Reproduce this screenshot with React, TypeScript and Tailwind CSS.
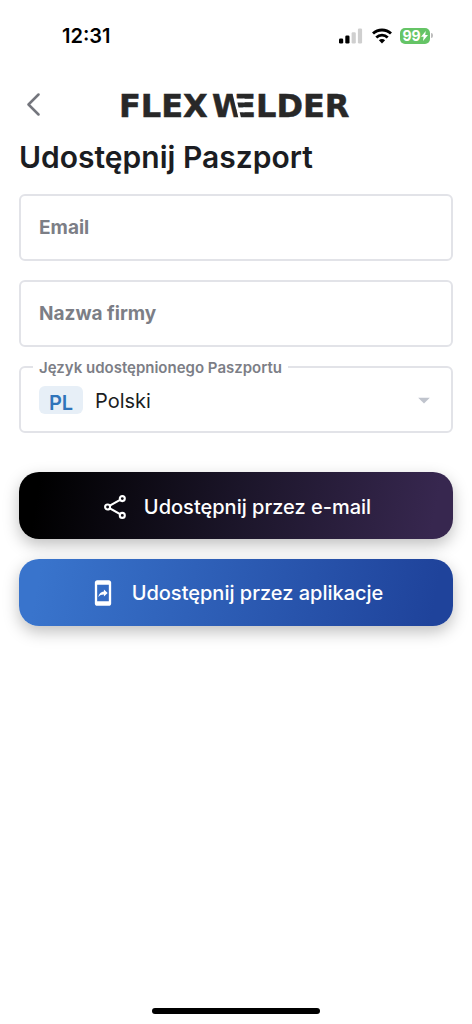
import { useState } from 'react';
import { MdArrowDropDown, MdMobileScreenShare } from 'react-icons/md';

const languages = [
  { code: 'PL', name: 'Polski' },
  { code: 'EN', name: 'English' },
  { code: 'DE', name: 'Deutsch' },
];

const StatusBar = () => (
  <div className="flex items-center justify-between pt-6 pl-[62px] pr-[39px] h-[47px]">
    <span className="text-[20px] leading-6 font-semibold text-black">12:31</span>
    <div className="flex items-center gap-2">
      <svg width="25" height="16" viewBox="0 0 25 16" aria-hidden="true">
        <rect x="0" y="10.5" width="4.2" height="5" rx="1.3" fill="#000" />
        <rect x="6.3" y="7.5" width="4.2" height="8" rx="1.3" fill="#000" />
        <rect x="12.6" y="4.2" width="4.2" height="11.3" rx="1.3" fill="#cfcfcf" />
        <rect x="18.9" y="0.5" width="4.2" height="15" rx="1.3" fill="#cfcfcf" />
      </svg>
      <svg width="20" height="16" viewBox="0 0 20 16" aria-hidden="true">
        <g fill="none" stroke="#000" strokeWidth="2.8">
          <path d="M1 5.6a13 13 0 0 1 18 0" />
          <path d="M4.3 9.4a8.2 8.2 0 0 1 11.4 0" />
        </g>
        <path d="M10 15.4 6.9 12.3a4.4 4.4 0 0 1 6.2 0z" fill="#000" />
      </svg>
      <div className="flex items-center gap-px">
        <div className="flex items-center justify-center w-[30px] h-4 rounded-[5px] bg-[#65c466] text-white">
          <span className="text-[14px] leading-4 font-bold">99</span>
          <svg width="7" height="10" viewBox="0 0 7 10" aria-hidden="true">
            <path d="M4.8 0 0 5.8h2.6L2 10l5-6H4.2z" fill="#fff" />
          </svg>
        </div>
        <div className="w-[2px] h-[5px] rounded-r-full bg-[#bdbdbd]" />
      </div>
    </div>
  </div>
);

// The W runs into a striped E, split by a diagonal gap
const Logo = () => (
  <svg width="232" height="40" viewBox="0 0 232 40" role="img" aria-label="Flexwelder">
    <defs>
      <clipPath id="w-cut">
        <path d="M88 0h22.6l9.5 40H88z" />
      </clipPath>
    </defs>
    <g fill="#282828" stroke="#282828" strokeWidth="0.5" fontFamily="'DejaVu Sans', sans-serif" fontSize="32" fontWeight="700">
      <text x="114" y="32">E</text>
      <path d="M110 13.5h14.6v4H110zM110 22.4h14.6v4.8H110zM110 0h3.2l9.5 40H110z" fill="#fff" stroke="none" />
      <text x="-1" y="32">FLEX</text>
      <text x="92" y="32" clipPath="url(#w-cut)">W</text>
      <text x="136" y="32">LDER</text>
    </g>
  </svg>
);

const ShareIcon = () => (
  <svg width="22" height="24" viewBox="0 0 22 24" fill="none" stroke="#fff" strokeWidth="2.1" aria-hidden="true">
    <circle cx="3.6" cy="12" r="2.5" />
    <circle cx="18.3" cy="3.6" r="2.5" />
    <circle cx="18.3" cy="20.4" r="2.5" />
    <path d="M5.8 10.7 16.1 4.9M5.8 13.3l10.3 5.8" />
  </svg>
);

interface TextFieldProps {
  id: string;
  label: string;
  type?: string;
}

const TextField = ({ id, label, type = 'text' }: TextFieldProps) => (
  <div className="relative">
    <input
      id={id}
      type={type}
      placeholder=" "
      className="peer block w-full h-[67px] px-[18px] text-[20px] text-[#1b1d22] border-2 border-[#e2e3e8] rounded-md outline-none"
    />
    <label
      htmlFor={id}
      className="absolute -top-2 left-3.5 px-1.5 bg-white text-[15px] leading-5 font-semibold text-[#7c7e86] peer-placeholder-shown:top-5 peer-placeholder-shown:text-[19px] peer-placeholder-shown:leading-7 peer-placeholder-shown:font-bold"
    >
      {label}
    </label>
  </div>
);

const App = () => {
  const [lang, setLang] = useState('PL');

  return (
    <div className="flex flex-col min-h-screen bg-white font-['Inter',sans-serif]">
      <StatusBar />
      <header className="grid grid-cols-[1fr_auto_1fr] items-center mt-[38px] px-5">
        <button type="button" aria-label="Wstecz" className="justify-self-start pl-1.5">
          <svg width="16" height="24" viewBox="0 0 16 24" fill="none" stroke="#74767d" strokeWidth="2.5" strokeLinecap="round" strokeLinejoin="round" aria-hidden="true">
            <path d="M12.5 1.5 2.5 11.5l10 10" />
          </svg>
        </button>
        <Logo />
      </header>

      <main className="px-[19px]">
        <h1 className="mt-3.5 text-[30px] leading-9 font-semibold text-[#1b1d22]">Udostępnij Paszport</h1>
        <form onSubmit={(e) => e.preventDefault()}>
          <div className="flex flex-col gap-[19px] mt-[19px]">
            <TextField id="email" label="Email" type="email" />
            <TextField id="company" label="Nazwa firmy" />
            <div className="relative">
              <label htmlFor="lang" className="absolute -top-2 left-3.5 px-1.5 bg-white text-[15px] leading-5 font-semibold text-[#7c7e86]">
                Język udostępnionego Paszportu
              </label>
              <select
                id="lang"
                value={lang}
                onChange={(e) => setLang(e.target.value)}
                className="block w-full h-[67px] pt-0.5 pl-[74px] pr-12 text-[20px] text-[#1b1d22] bg-white border-2 border-[#e2e3e8] rounded-md appearance-none outline-none"
              >
                {languages.map((l) => (
                  <option key={l.code} value={l.code}>{l.name}</option>
                ))}
              </select>
              <span className="absolute left-5 top-5 flex items-center justify-center w-11 h-7 pt-1.5 rounded-md bg-[#e7eff7] text-[20px] font-semibold text-[#2f74ba] pointer-events-none">
                {lang}
              </span>
              <MdArrowDropDown className="absolute right-[15px] top-5 w-7 h-7 text-[#c0c4cd] pointer-events-none" />
            </div>
          </div>

          <div className="flex flex-col gap-5 mt-[39px]">
            <button
              type="submit"
              className="flex items-center justify-center gap-[18px] h-[67px] pt-0.5 pl-[3px] rounded-[20px] bg-linear-[100deg,#000_5%,#1b1529_50%,#37274f_95%] text-[20px] font-medium text-white shadow-[0_6px_16px_rgba(0,0,0,0.25)]"
            >
              <ShareIcon />
              Udostępnij przez e-mail
            </button>
            <button
              type="button"
              className="flex items-center justify-center gap-[15px] h-[67px] pt-px rounded-[20px] bg-linear-[100deg,#3974cc_5%,#1f439b_95%] text-[20px] font-medium text-white shadow-[0_6px_16px_rgba(0,0,0,0.25)]"
            >
              <MdMobileScreenShare className="w-7 h-7" />
              Udostępnij przez aplikacje
            </button>
          </div>
        </form>
      </main>

      <div className="mt-auto mx-auto mb-[10px] w-[168px] h-1.5 rounded-full bg-black" />
    </div>
  );
};

export default App;
